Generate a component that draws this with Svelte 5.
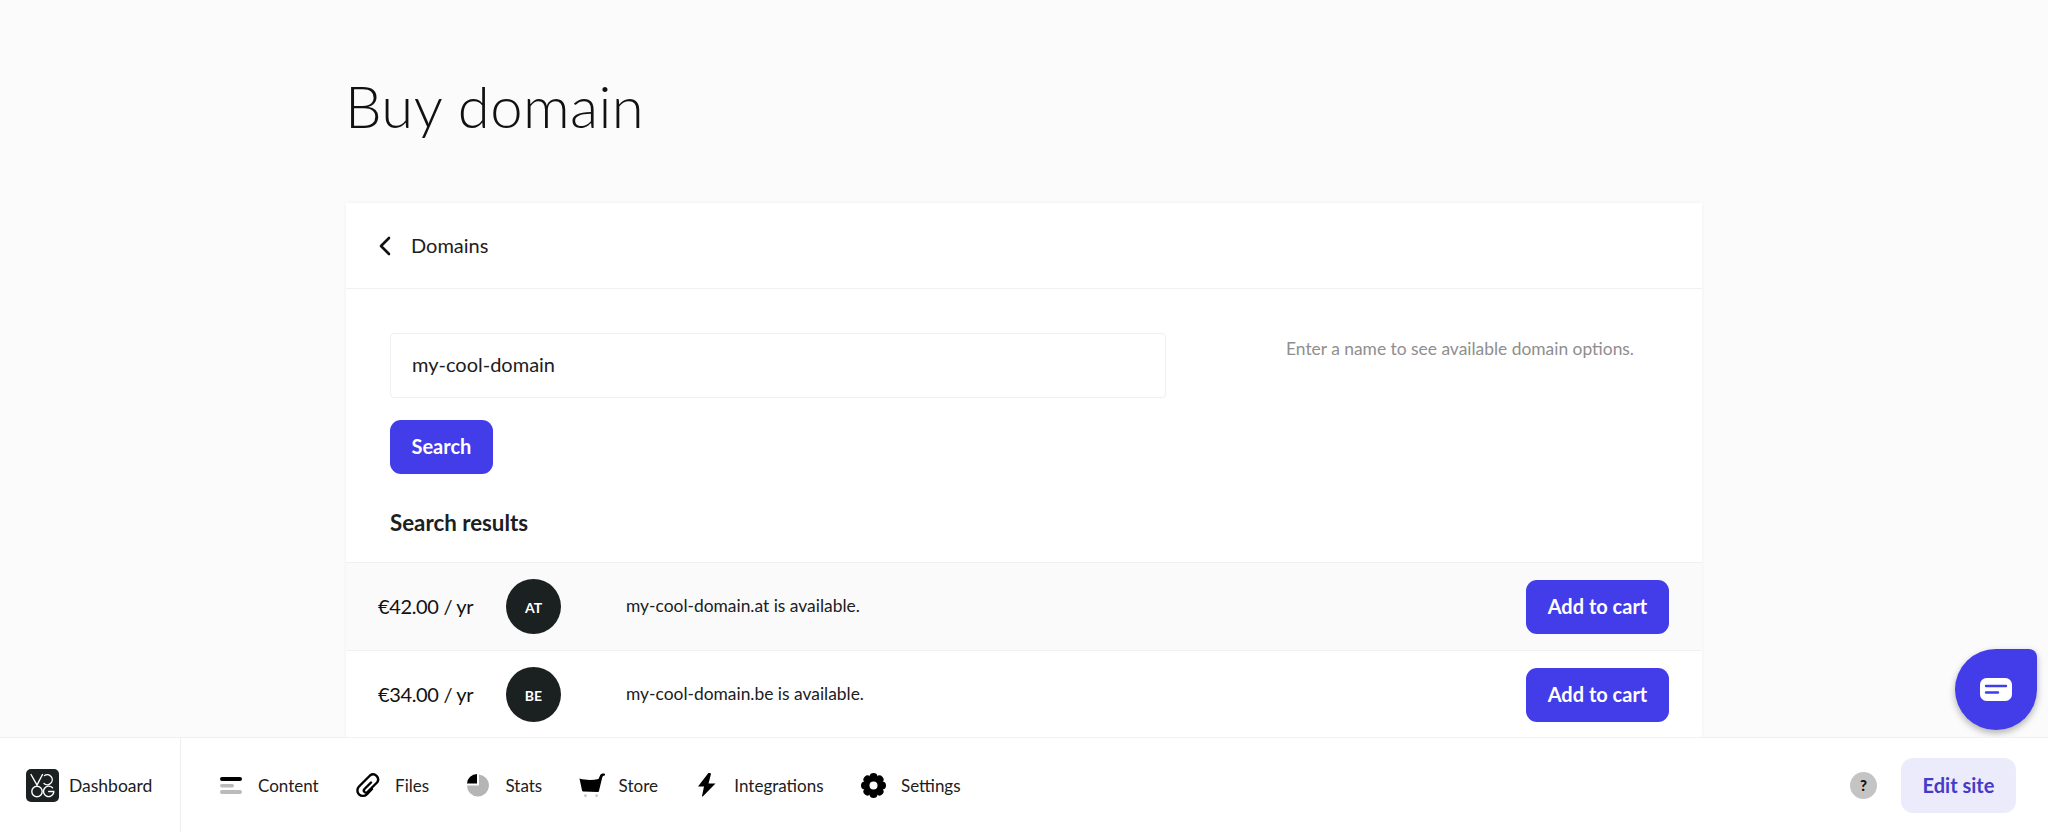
<script>
  const results = [
    { price: '€42.00 / yr', tld: 'AT', domain: 'my-cool-domain.at', shaded: true },
    { price: '€34.00 / yr', tld: 'BE', domain: 'my-cool-domain.be', shaded: false }
  ];
  const lobes = [0, 45, 90, 135, 180, 225, 270, 315];
</script>

<div class="app">
  <main class="main">
    <div class="page">
      <h1>Buy domain</h1>
      <section class="card">
        <header class="card-head">
          <svg class="back" width="14" height="20" viewBox="0 0 14 20" fill="none" stroke="#111" stroke-width="2.600" stroke-linecap="round" stroke-linejoin="round"><path d="M11 2 3 10l8 8"/></svg>
          <span class="title">Domains</span>
        </header>
        <div class="search">
          <div class="search-left">
            <div class="input">my-cool-domain</div>
            <button class="btn">Search</button>
          </div>
          <p class="help">Enter a name to see available domain options.</p>
        </div>
        <h2>Search results</h2>
        {#each results as r}
          <div class="row" class:shaded={r.shaded}>
            <span class="price">{r.price}</span>
            <span class="avatar">{r.tld}</span>
            <span class="domain">{r.domain} is available.</span>
            <button class="btn cart">Add to cart</button>
          </div>
        {/each}
      </section>
    </div>
    <button class="chat" aria-label="Chat">
      <svg width="32" height="24" viewBox="0 0 32 24"><rect width="32" height="23" rx="6.500" fill="#fff"/><path d="M6 8h20M6 14.500h12" stroke="#433ce9" stroke-width="2.400" stroke-linecap="round"/></svg>
    </button>
  </main>

  <footer class="bar">
    <div class="dash">
      <svg width="33" height="33" viewBox="0 0 33 33" fill="none">
        <rect width="33" height="33" rx="5" fill="#1b2021"/>
        <g stroke="#fff" stroke-width="1.400" stroke-linecap="round">
          <path d="M5 5.500 11 16l5.500-10.500"/>
          <path d="M18.500 6.500a5 5 0 1 1-.5 8"/>
          <circle cx="11" cy="22.500" r="5.200"/>
          <path d="M26.500 18.800a5.200 5.200 0 1 0 1.200 5v-1.300h-5"/>
        </g>
      </svg>
      <span>Dashboard</span>
    </div>
    <nav class="nav">
      <a class="item"><span class="ic"><svg width="24" height="24" viewBox="0 0 24 24"><rect x="1" y="4" width="22" height="4" rx="2" fill="#000"/><rect x="1" y="11" width="14" height="3.500" rx="1.750" fill="#bbb"/><rect x="1" y="17" width="22" height="4" rx="2" fill="#bbb"/></svg></span>Content</a>
      <a class="item"><span class="ic"><svg width="26" height="26" viewBox="0 0 26 26" fill="none" stroke="#000" stroke-width="2.400" stroke-linecap="round" stroke-linejoin="round"><path d="M16 10.500 9.500 17a2 2 0 0 0 3 3L22 10.500a5 5 0 0 0-7-7L4 14.500a5.500 5.500 0 0 0 7.800 7.800L17 17"/></svg></span>Files</a>
      <a class="item"><span class="ic"><svg width="24" height="24" viewBox="0 0 24 24"><path d="M13 1.500a11 11 0 1 1-12 11h12z" fill="#b5b5b5"/><path d="M11 1v9.500H1A10 10 0 0 1 11 1z" fill="#000"/></svg></span>Stats</a>
      <a class="item"><span class="ic"><svg width="28" height="26" viewBox="0 0 28 26"><path d="M.5 6C7 8 15 8 21 6.500L23 2c.5-1 2-1.500 4-1.500 1.500 0 1.500 2.500 0 2.500-1 0-1.500.5-2 2l-3.500 14.500c-.2.800-.7 1.100-1.500 1.100L5 20c-1 0-1.500-.5-1.700-1.200z" fill="#000"/><circle cx="7" cy="24.500" r="1.600" fill="#ccc"/><circle cx="19" cy="24.500" r="1.600" fill="#ccc"/></svg></span>Store</a>
      <a class="item"><span class="ic"><svg width="20" height="24" viewBox="0 0 20 24"><path d="M11 .500 1 13.500h6l-2 9.500c0 .6.500.8 1 .3L18.500 10.500h-7L14 1c0-.8-2.300-1.300-3-.5z" fill="#000"/></svg></span>Integrations</a>
      <a class="item gear"><span class="ic"><svg width="25" height="25" viewBox="0 0 25 25"><g fill="#000">{#each lobes as a}<circle cx="12.500" cy="4" r="4" transform="rotate({a} 12.500 12.500)"/>{/each}<circle cx="12.500" cy="12.500" r="8.500"/></g><circle cx="12.500" cy="12.500" r="4" fill="#fff"/></svg></span>Settings</a>
    </nav>
    <div class="right">
      <span class="q">?</span>
      <button class="edit">Edit site</button>
    </div>
  </footer>
</div>

<style>
  :global(body) {
    margin: 0;
    background: #fbfbfb;
  }
  .app {
    height: 832px;
    display: flex;
    flex-direction: column;
    overflow: hidden;
    font-family: Lato, "Open Sans", sans-serif;
    color: #1b2021;
  }
  .main {
    position: relative;
    flex: 1;
    min-height: 0;
    overflow: hidden;
  }
  .page {
    width: 1356px;
    margin-left: 346px;
  }
  h1 {
    margin: 0 0 0 -1px;
    padding-top: 68px;
    height: 203px;
    box-sizing: border-box;
    font-size: 58px;
    line-height: 76px;
    font-weight: 300;
    letter-spacing: 0.4px;
    color: #111;
  }
  .card {
    background: #fff;
    box-shadow: 0 0 4px rgba(0, 0, 0, 0.05);
  }
  .card-head {
    height: 86px;
    box-sizing: border-box;
    border-bottom: 1px solid #f1f1f1;
    display: flex;
    align-items: center;
    gap: 19px;
    padding-left: 32px;
    font-size: 20px;
  }
  .title {
    padding-bottom: 2px;
  }
  .search {
    display: grid;
    grid-template-columns: 776px 1fr;
    column-gap: 120px;
    padding: 44px 0 0 44px;
  }
  .search-left {
    display: flex;
    flex-direction: column;
    align-items: flex-start;
    gap: 22px;
  }
  .input {
    width: 100%;
    height: 65px;
    box-sizing: border-box;
    border: 1px solid #f0f0f0;
    border-radius: 4px;
    padding: 0 0 3px 21px;
    display: flex;
    align-items: center;
    font-size: 20px;
  }
  .help {
    margin: 0;
    padding-top: 4px;
    font-size: 17.400px;
    line-height: 24px;
    color: #8e8e8e;
  }
  .btn {
    height: 54px;
    padding: 0 21.500px 2px;
    border: 0;
    border-radius: 11px;
    background: #433ce9;
    color: #fff;
    font: 700 20px Lato, sans-serif;
  }
  h2 {
    margin: 0;
    padding: 34px 0 0 44px;
    height: 88px;
    box-sizing: border-box;
    font-size: 22.300px;
    line-height: 30px;
    font-weight: 700;
  }
  .row {
    height: 88px;
    box-sizing: border-box;
    border-top: 1px solid #f1f1f1;
    display: flex;
    align-items: center;
    padding: 0 33px 0 32px;
    background: #fff;
  }
  .row.shaded {
    background: #fafafa;
  }
  .price {
    width: 128px;
    padding-bottom: 2px;
    font-size: 20px;
    letter-spacing: -0.35px;
    color: #111;
  }
  .avatar {
    width: 55px;
    height: 55px;
    border-radius: 50%;
    background: #1b2021;
    color: #fff;
    display: flex;
    align-items: center;
    justify-content: center;
    font-size: 14px;
    font-weight: 700;
    padding-top: 2px;
    box-sizing: border-box;
  }
  .domain {
    margin-left: 65px;
    flex: 1;
    padding-bottom: 2px;
    font-size: 17.400px;
  }
  .cart {
    width: 143px;
    padding: 0 0 2px;
  }
  .chat {
    position: absolute;
    right: 11px;
    top: 649px;
    width: 82px;
    height: 81px;
    padding: 0;
    border: 0;
    border-radius: 50% 8px 50% 50%;
    background: #433ce9;
    box-shadow: 0 3px 7px rgba(0, 0, 0, 0.3);
    display: flex;
    align-items: center;
    justify-content: center;
  }
  .bar {
    height: 94px;
    flex: none;
    background: #fff;
    border-top: 1px solid #f0f0f0;
    display: flex;
    align-items: center;
  }
  .dash {
    width: 181px;
    height: 100%;
    box-sizing: border-box;
    border-right: 1px solid #eee;
    padding-left: 26px;
    display: flex;
    align-items: center;
    gap: 10px;
    font-size: 17.500px;
  }
  .nav {
    display: flex;
    align-items: center;
    gap: 36.400px;
    padding-left: 37px;
    flex: 1;
    font-size: 17px;
  }
  .item {
    display: flex;
    align-items: center;
    gap: 14px;
  }
  .gear {
    padding-left: 1px;
  }
  .ic {
    width: 26px;
    height: 28px;
    flex: none;
    display: flex;
    align-items: center;
    justify-content: center;
  }
  .right {
    display: flex;
    align-items: center;
    gap: 24px;
    padding-right: 32px;
  }
  .q {
    width: 27px;
    height: 27px;
    border-radius: 50%;
    background: #c4c4c4;
    color: #111;
    font-size: 15px;
    font-weight: 900;
    display: flex;
    align-items: center;
    justify-content: center;
  }
  .edit {
    width: 115px;
    height: 55px;
    border: 0;
    border-radius: 12px;
    background: #ecebfb;
    color: #433cc9;
    font: 700 20px Lato, sans-serif;
    padding: 0;
  }
</style>
